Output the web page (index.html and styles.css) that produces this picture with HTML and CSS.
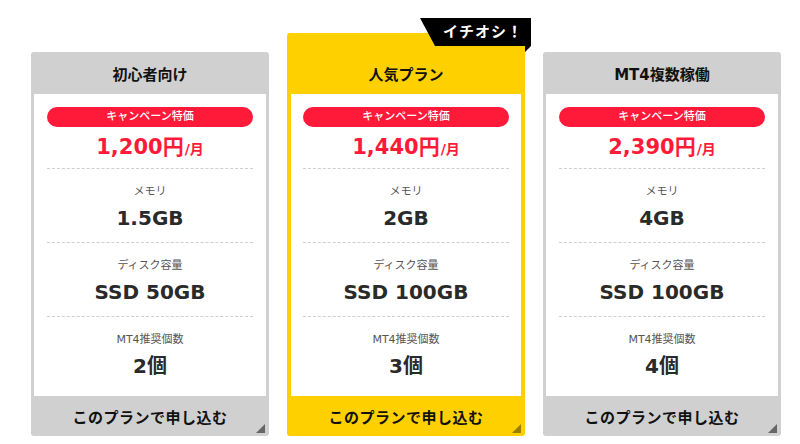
FILE: index.html
```html
<!DOCTYPE html>
<html lang="ja">
<head>
<meta charset="utf-8">
<link rel="stylesheet" href="styles.css">
</head>
<body>
<div class="plans">
  <div class="card">
    <div class="card-head">初心者向け</div>
    <div class="card-body">
      <div class="pill">キャンペーン特価</div>
      <div class="price">1,200円<span class="per">/月</span></div>
      <div class="row"><div class="label">メモリ</div><div class="value">1.5GB</div></div>
      <div class="row"><div class="label">ディスク容量</div><div class="value">SSD 50GB</div></div>
      <div class="row"><div class="label">MT4推奨個数</div><div class="value">2個</div></div>
    </div>
    <div class="card-foot">このプランで申し込む<span class="corner"></span></div>
  </div>
  <div class="card card-featured">
    <div class="badge">イチオシ！</div>
    <div class="card-head">人気プラン</div>
    <div class="card-body">
      <div class="pill">キャンペーン特価</div>
      <div class="price">1,440円<span class="per">/月</span></div>
      <div class="row"><div class="label">メモリ</div><div class="value">2GB</div></div>
      <div class="row"><div class="label">ディスク容量</div><div class="value">SSD 100GB</div></div>
      <div class="row"><div class="label">MT4推奨個数</div><div class="value">3個</div></div>
    </div>
    <div class="card-foot">このプランで申し込む<span class="corner"></span></div>
  </div>
  <div class="card">
    <div class="card-head">MT4複数稼働</div>
    <div class="card-body">
      <div class="pill">キャンペーン特価</div>
      <div class="price">2,390円<span class="per">/月</span></div>
      <div class="row"><div class="label">メモリ</div><div class="value">4GB</div></div>
      <div class="row"><div class="label">ディスク容量</div><div class="value">SSD 100GB</div></div>
      <div class="row"><div class="label">MT4推奨個数</div><div class="value">4個</div></div>
    </div>
    <div class="card-foot">このプランで申し込む<span class="corner"></span></div>
  </div>
</div>
</body>
</html>
```
FILE: styles.css
```css
html, body {
  margin: 0;
  padding: 0;
  background: #fff;
}
body {
  font-family: "DejaVu Sans", "Noto Sans CJK JP", sans-serif;
  color: #333;
}
.plans {
  display: flex;
  align-items: flex-end;
  gap: 18px;
  padding: 33px 0 0 31px;
}
.card {
  position: relative;
  width: 238px;
  box-sizing: border-box;
  background: #d0d0d0;
  border-radius: 3px;
  padding: 0 3px;
  display: flex;
  flex-direction: column;
}
.card-featured {
  background: #ffd000;
  padding: 0 4px;
}
.card-head {
  height: 42px;
  display: flex;
  align-items: center;
  justify-content: center;
  font-size: 15px;
  font-weight: bold;
  color: #111;
}
.card-featured .card-head {
  height: 61px;
  padding-top: 19px;
  box-sizing: border-box;
}
.card-body {
  background: #fff;
  padding: 13px 13px 6px;
  text-align: center;
}
.card-featured .card-body {
  padding: 13px 12px 6px;
}
.pill {
  height: 20px;
  line-height: 20px;
  border-radius: 10px;
  background: #ff1a3a;
  color: #fff;
  font-size: 11px;
  font-weight: 500;
}
.price {
  height: 41px;
  line-height: 40px;
  color: #ff1a3a;
  font-size: 21px;
  font-weight: bold;
}
.per {
  font-size: 14px;
  margin-left: 1px;
}
.row {
  border-top: 1px dashed #cfcfcf;
  padding: 15px 0 6px;
}
.label {
  font-size: 11px;
  line-height: 16px;
  color: #555;
}
.value {
  font-size: 20px;
  line-height: 36px;
  font-weight: bold;
  color: #2a2a2a;
}
.card-foot {
  position: relative;
  height: 40px;
  display: flex;
  align-items: center;
  justify-content: center;
  font-size: 15px;
  letter-spacing: 0.5px;
  font-weight: bold;
  color: #111;
}
.corner {
  position: absolute;
  right: 1px;
  bottom: 3px;
  width: 0;
  height: 0;
  border-style: solid;
  border-width: 0 0 9px 9px;
  border-color: transparent transparent #666 transparent;
}
.card-featured .corner {
  right: 0;
  border-color: transparent transparent rgba(0,0,0,0.4) transparent;
}
.badge {
  position: absolute;
  left: 133px;
  top: -15px;
  width: 111px;
  height: 34px;
  box-sizing: border-box;
  background: #000;
  clip-path: polygon(0 0, 111px 0, 111px 28px, 105px 34px, 105px 28px, 15px 28px);
  color: #fff;
  font-size: 15px;
  font-weight: bold;
  line-height: 28px;
  padding-left: 23px;
  letter-spacing: 1px;
}
```
